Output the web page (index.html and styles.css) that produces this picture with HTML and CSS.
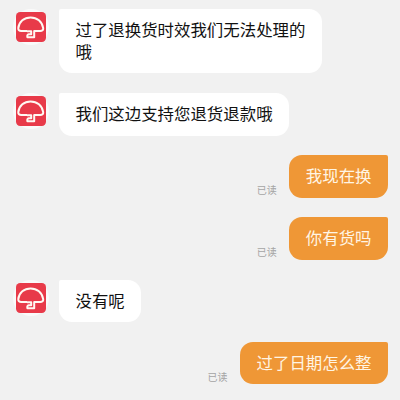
FILE: index.html
```
<!DOCTYPE html>
<html lang="zh-CN">
<head>
<meta charset="utf-8">
<title>聊天</title>
<link rel="stylesheet" href="styles.css">
</head>
<body>
<svg width="0" height="0" class="defs" aria-hidden="true">
  <symbol id="logo" viewBox="0 0 30 30">
    <rect width="30" height="30" rx="4.2" fill="#e83a49"/>
    <path d="M11 19H5.2Q2.2 19 2.3 16.2C3 9.6 8.2 5.4 14.6 5.4S26.2 9.6 27.2 16.2Q27.4 19 24.2 19H18.2V25.3H11.4Q10.8 22.6 12.8 22.2H15.2V19.2H11" fill="none" stroke="#fff8f2" stroke-width="2" stroke-linejoin="round"/>
  </symbol>
</svg>
<main class="chat">
  <div class="row">
    <div class="avatar"><svg><use href="#logo"/></svg></div>
    <div class="bubble">过了退换货时效我们无法处理的<br>哦</div>
  </div>
  <div class="row">
    <div class="avatar"><svg><use href="#logo"/></svg></div>
    <div class="bubble">我们这边支持您退货退款哦</div>
  </div>
  <div class="row mine">
    <span class="read">已读</span>
    <div class="bubble">我现在换</div>
  </div>
  <div class="row mine">
    <span class="read">已读</span>
    <div class="bubble">你有货吗</div>
  </div>
  <div class="row">
    <div class="avatar"><svg><use href="#logo"/></svg></div>
    <div class="bubble">没有呢</div>
  </div>
  <div class="row mine">
    <span class="read">已读</span>
    <div class="bubble">过了日期怎么整</div>
  </div>
</main>
</body>
</html>
```
FILE: styles.css
```
body {
  margin: 0;
  background: #f1f1f1;
  font-family: "Noto Sans CJK SC", sans-serif;
}
.defs {
  display: none;
}
.chat {
  display: flex;
  flex-direction: column;
  gap: 19.6px;
  box-sizing: border-box;
  height: 400px;
  padding: 8.5px 12px 0 13px;
  overflow: hidden;
}
.row {
  display: flex;
  align-items: flex-start;
  gap: 10px;
}
.row.mine {
  justify-content: flex-end;
  align-items: flex-end;
  gap: 12.5px;
}
.avatar {
  display: flex;
  align-items: center;
  justify-content: center;
  width: 36px;
  height: 36px;
  border-radius: 50%;
  background: #fafafa;
}
.avatar svg {
  width: 30px;
  height: 30px;
}
.bubble {
  padding: 9px 16.5px 11.3px;
  border-radius: 2px 13px 13px 13px;
  background: #fff;
  color: #111;
  font-size: 16.43px;
  line-height: 22.3px;
  white-space: nowrap;
}
.mine .bubble {
  border-radius: 13px 2px 13px 13px;
  background: #ef9736;
  color: #fff5e4;
}
.read {
  margin-bottom: 0.5px;
  color: #a5a5a5;
  font-size: 10px;
  line-height: 15px;
}
```
